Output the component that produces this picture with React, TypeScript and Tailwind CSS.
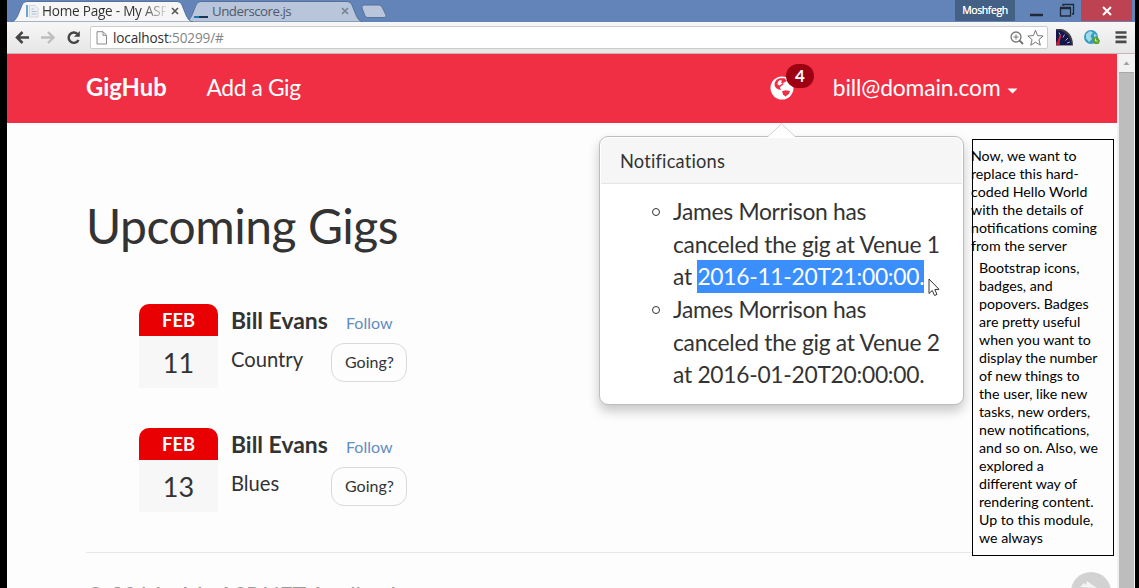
import type { ReactNode } from "react";

const lato = "font-['Lato',sans-serif]";
const segoe = "font-['Open_Sans',sans-serif]";

function TabShape({ width, fill }: { width: number; fill: string }) {
  const w = width;
  return (
    <svg className="absolute inset-0" width={w} height="22" viewBox={`0 0 ${w} 22`}>
      <path
        d={`M0 22 C4 21 5 19 7 15 L11 5 Q12 1.5 16 1.5 H${w - 16} Q${w - 12} 1.5 ${w - 11} 5 L${w - 7} 15 C${w - 5} 19 ${w - 4} 21 ${w} 22 Z`}
        fill={fill}
        stroke="#56719b"
        strokeWidth="1"
      />
    </svg>
  );
}

function TabClose({ color }: { color: string }) {
  return (
    <svg width="8" height="8" viewBox="0 0 8 8" stroke={color} strokeWidth="1.6">
      <path d="M1 1 L7 7 M7 1 L1 7" />
    </svg>
  );
}

function TitleBar() {
  return (
    <div className={`flex h-[22px] bg-[#6384b8] text-[14px] leading-[22px] ${segoe}`}>
      <div className="relative z-10 ml-[4px] h-[22px] w-[182px] shrink-0">
        <TabShape width={182} fill="#f6f6f6" />
        <div className="relative flex items-center pl-[14px]">
          <svg width="14" height="14" viewBox="0 0 14 14">
            <path d="M4.5 1.5 H10 L13 4.5 V13 H4.5 Z" fill="#eef1f4" stroke="#cfd5da" />
            <path d="M6.5 5 H9 M6.5 7.5 H11.5 M6.5 10 H11.5" stroke="#a9bfd2" />
            <path d="M2 1 V13" stroke="#6ba7cd" strokeWidth="2" />
          </svg>
          <span className="ml-[3px] w-[124px] overflow-hidden whitespace-nowrap bg-gradient-to-r from-[#303030] from-80% to-[#30303020] bg-clip-text text-[13.6px] tracking-[-0.25px] text-transparent">
            Home Page - My ASP
          </span>
          <span className="ml-[5px]">
            <TabClose color="#555" />
          </span>
        </div>
      </div>
      <div className="relative ml-[-8px] h-[22px] w-[178px] shrink-0">
        <TabShape width={178} fill="#b8c5da" />
        <div className="relative flex items-center pl-[9px]">
          <span className="mt-[11px] flex">
            <span className="h-[2px] w-[5px] bg-[#2077b4]" />
            <span className="h-[2px] w-[9px] bg-[#1d3650]" />
          </span>
          <span className="ml-[4px] w-[130px] text-[13.3px] tracking-[-0.5px] text-[#4f5b6c]">Underscore.js</span>
          <span className="ml-[-1px]">
            <TabClose color="#76808f" />
          </span>
        </div>
      </div>
      <svg className="ml-[-4px] mt-[4px]" width="30" height="15" viewBox="0 0 30 15">
        <path d="M5 1 H20 Q22 1 23 3 L27 11 Q28 13.500 25 13.500 H9 Q7 13.500 6 12 L3 4 Q2 1 5 1Z" fill="#b8c5da" stroke="#56719b" />
      </svg>
      <div className="ml-auto flex">
        <div className="h-[21px] w-[60px] bg-[#456085] text-center text-[10.500px] tracking-[-0.4px] leading-[20px] text-white [text-shadow:0_0_0.5px_white]">
          Moshfegh
        </div>
        <svg width="66" height="22" viewBox="0 0 66 22" fill="none" stroke="#1f2a38">
          <path d="M15 15 H28" strokeWidth="2.500" />
          <path d="M45.500 8.500 H55.500 V16 H45.500 Z M45 7.500 H56" strokeWidth="1.300" />
          <path d="M48 6 V4.500 H58.500 V14 H57" strokeWidth="1.300" />
        </svg>
        <div className="flex h-[21px] w-[51px] items-center justify-center bg-[#bd4352]">
          <svg width="10" height="10" viewBox="0 0 10 10" stroke="white" strokeWidth="2">
            <path d="M1 1 L9 9 M9 1 L1 9" />
          </svg>
        </div>
        <div className="w-[3px]" />
      </div>
    </div>
  );
}

function Toolbar() {
  return (
    <div className={`flex h-[32px] items-center border-b border-[#c9b5b8] bg-gradient-to-b from-[#f7f7f7] to-[#e6e6e6] ${segoe}`}>
      <svg className="shrink-0" width="83" height="30" viewBox="0 0 83 30" fill="none">
        <path d="M22 14.500 H10 M15.500 9 L10 14.500 L15.500 20" stroke="#454545" strokeWidth="2.500" />
        <path d="M34 14.500 H46 M41 9 L46.500 14.500 L41 20" stroke="#bdbdbd" strokeWidth="2.300" />
        <path d="M71.500 17 A5.200 5.200 0 1 1 70.500 11" stroke="#454545" strokeWidth="2.400" />
        <path d="M72.800 8 V13.800 H67 Z" fill="#454545" />
      </svg>
      <div className="flex h-[23px] w-[958px] shrink-0 items-center rounded-[2px] border border-[#cccccc] bg-white">
        <svg className="ml-[5px]" width="12" height="14" viewBox="0 0 12 14" fill="#fbfbfb" stroke="#8c8c8c">
          <path d="M1 0.700 H7 L10.500 4.300 V13 H1 Z M7 0.700 V4.300 H10.500" />
        </svg>
        <span className="ml-[5px] text-[13.6px] leading-[20px] tracking-[-0.15px] text-[#303030]">
          localhost<span className="text-[#858585]">:50299/#</span>
        </span>
        <svg className="ml-auto mr-px" width="38" height="20" viewBox="0 0 38 20" fill="none" stroke="#777">
          <circle cx="8" cy="9" r="5" strokeWidth="1.300" />
          <path d="M5.500 9 H10.500 M8 6.500 V11.500" />
          <path d="M11.500 12.500 L15 16" strokeWidth="2" />
          <path d="M27.500 2.200 L29.600 7.600 L35.200 8 L30.900 11.600 L32.300 17.200 L27.500 14.200 L22.700 17.200 L24.100 11.600 L19.800 8 L25.400 7.600 Z" />
        </svg>
      </div>
      <svg className="shrink-0" width="80" height="30" viewBox="0 0 80 30">
        <path d="M8 6 H13 C20 7 25 13 25 22.500 H8 Z" fill="#3d3d42" />
        <path d="M8 7.500 H12 C18 9 23 14 23.500 22 H8 Z" fill="#15164a" />
        <path d="M11 9.500 L12.500 12.500 M16.500 11.500 L15 14.500 M20 15 L17.500 17.500 M22 19 L19 20" stroke="#a3a9cc" />
        <path d="M12.500 12.500 L10 20.500" stroke="#e01c35" strokeWidth="2" />
        <circle cx="10" cy="20.500" r="2" fill="#c41a3a" />
        <circle cx="43" cy="14" r="7" fill="#349bc3" />
        <path d="M38 11 L42 8 L45 9.500 L42.500 13 L44 16 L41 19 L38 15.500Z M46 10.500 L49 12.500 L46 14.500Z" fill="#9fdbe8" />
        <path d="M44 17 A4 4 0 0 1 50 14.500 L52 18 L50.500 21 L46.500 21 Z" fill="#5a9f31" />
        <path d="M47.500 15.500 V18 H49.500" stroke="#d9efcc" fill="none" />
        <path d="M67.500 9.500 H78.500 M67.500 14.200 H78.500 M67.500 18.900 H78.500" stroke="#4a4a4a" strokeWidth="2.700" />
      </svg>
    </div>
  );
}

function NavBar() {
  return (
    <nav className="relative flex h-[69px] items-center bg-[#f02f45] pl-[79px] text-[22.8px] text-white">
      <span className="mt-[-1px] w-[120.500px] text-[23.8px] font-bold">GigHub</span>
      <span className="mt-[-2px] tracking-[-0.38px]">Add a Gig</span>
      <svg className="absolute left-[763px] top-[22px]" width="24" height="24" viewBox="0 0 24 24">
        <circle cx="12" cy="12" r="11.500" fill="white" />
        <path
          d="M9.500 2.200 L6.500 3.800 L4.800 6.500 L4.500 9.500 L6 12 L8.500 13.500 L11.500 13.800 L9.800 12 L10.500 10.500 L13.500 8.500 L13 7 L17 5 L14.500 2.200 Z"
          fill="#f02f45"
        />
        <path d="M12 15.200 L15.500 14.200 L20 15 L19 17.800 L15.500 20.500 L13 18.500 Z" fill="#f02f45" />
        <path d="M7.800 6 L9.500 4.200 L12 4.500 L11 6.500 L12.500 7.500 L9.500 9.500 L7.500 8.500 Z" fill="white" />
      </svg>
      <span className="absolute left-[779px] top-[10px] flex h-[24px] w-[28px] items-center justify-center rounded-full bg-[#9c0012] text-[17px] font-bold">
        4
      </span>
      <span className="ml-auto mr-[116.500px] mt-[-2px] tracking-[-0.14px]">bill@domain.com</span>
      <svg className="absolute left-[1000px] top-[34px]" width="11" height="6" viewBox="0 0 11 6">
        <path d="M0.500 0.500 H10.500 L5.500 5.500 Z" fill="white" />
      </svg>
      <Popover />
    </nav>
  );
}

function Notice({ children }: { children: ReactNode }) {
  return (
    <li className="flex">
      <span className="mr-[13px] mt-[13px] size-[8px] shrink-0 rounded-full border border-[#333]" />
      <div className="whitespace-nowrap tracking-[-0.27px]">{children}</div>
    </li>
  );
}

function Popover() {
  return (
    <section className="absolute left-[592px] top-[82px] h-[269px] w-[365px] rounded-[9px] border border-[#bdbdbd] bg-white p-px text-[#333] shadow-[0_6px_12px_rgba(0,0,0,0.22)]">
      <svg className="absolute left-[167px] top-[-14px]" width="30" height="15" viewBox="0 0 30 15">
        <path d="M0.500 14 L14.500 0.800 L28.500 14" fill="white" stroke="#cfcfcf" />
        <path d="M1.500 14.500 H27.500" stroke="white" strokeWidth="1.500" />
      </svg>
      <h2 className="h-[46px] rounded-t-[7px] border-b border-[#e5e5e5] bg-[#f6f6f6] pl-[19px] text-[18.3px] leading-[47px] tracking-[0.18px]">
        Notifications
      </h2>
      <ul className="pl-[51px] pt-[11px] text-[22.8px] leading-[32.6px]">
        <Notice>
          James Morrison has
          <br />
          canceled the gig at Venue 1
          <br />
          at <span className="inline-block h-[33px] bg-[#3b8ffc] align-top text-white">2016-11-20T21:00:00.</span>
        </Notice>
        <Notice>
          James Morrison has
          <br />
          canceled the gig at Venue 2
          <br />
          at 2016-01-20T20:00:00.
        </Notice>
      </ul>
    </section>
  );
}

function Gig({ day, genre }: { day: number; genre: string }) {
  return (
    <article className="flex h-[84px]">
      <div className="w-[79px] overflow-hidden rounded-t-[10px] bg-[#f7f7f7] text-center">
        <div className="h-[32px] bg-[#e90003] text-[18.3px] font-bold leading-[33px] text-white">FEB</div>
        <div className="text-[27px] leading-[54px]">{day}</div>
      </div>
      <div className="ml-[13px] w-[100px] whitespace-nowrap">
        <h3 className="text-[22.9px] font-bold leading-[33px]">Bill Evans</h3>
        <p className="mt-[4px] text-[20.2px] leading-[36px]">{genre}</p>
      </div>
      <div className="flex w-[76px] flex-col">
        <a className="h-[39px] pl-[15px] text-[16px] leading-[38px] text-[#628cc2]">Follow</a>
        <button className="h-[39px] rounded-[13px] border border-[#d9d9d9] pb-px pl-px text-[16px]">Going?</button>
      </div>
    </article>
  );
}

const firstNote = [
  "Now, we want to",
  "replace this hard-",
  "coded Hello World",
  "with the details of",
  "notifications coming",
  "from the server",
];

const secondNote = [
  "Bootstrap icons,",
  "badges, and",
  "popovers. Badges",
  "are pretty useful",
  "when you want to",
  "display the number",
  "of new things to",
  "the user, like new",
  "tasks, new orders,",
  "new notifications,",
  "and so on. Also, we",
  "explored a",
  "different way of",
  "rendering content.",
  "Up to this module,",
  "we always",
];

function Annotation() {
  return (
    <aside className="absolute left-[972px] top-[139px] h-[417px] w-[142px] whitespace-nowrap border border-black bg-[#fdfdfd] pt-[7px] text-[14.2px] leading-[18px] text-black">
      <div className="ml-[-2px]">
        {firstNote.map((line) => (
          <p key={line}>{line}</p>
        ))}
      </div>
      <div className="ml-[6px] mt-[4px]">
        {secondNote.map((line) => (
          <p key={line}>{line}</p>
        ))}
      </div>
    </aside>
  );
}

function ScrollBar() {
  return (
    <div className="flex w-[18px] shrink-0 flex-col items-center bg-[#f1f1f1]">
      <svg className="shrink-0" width="17" height="18" viewBox="0 0 17 18">
        <path d="M5.500 11 L8.500 7.500 L11.500 11 Z" fill="#a0a0a0" />
      </svg>
      <div className="w-[15px] grow border-t border-[#a8a8a8] bg-[#bdbdbd]" />
    </div>
  );
}

export default function App() {
  return (
    <div className={`relative flex h-[588px] w-[1139px] flex-col overflow-hidden bg-black pl-[7px] pr-[4px] text-[#333] ${lato}`}>
      <TitleBar />
      <Toolbar />
      <div className="flex grow">
        <div className="relative flex w-[1110px] flex-col bg-[#fdfdfd]">
          <NavBar />
          <main className="px-[79px] pt-[74px]">
            <h1 className="whitespace-nowrap text-[48px] leading-[58px] tracking-[-0.48px]">Upcoming Gigs</h1>
            <div className="flex flex-col gap-[40px] pl-[53px] pt-[49px]">
              <Gig day={11} genre="Country" />
              <Gig day={13} genre="Blues" />
            </div>
            <hr className="mt-[40px] border-[#e8e8e8]" />
            <footer className="mt-[26px] h-[9px] overflow-hidden whitespace-nowrap text-[22.8px] leading-[32px] tracking-[-0.2px] text-[#999]">
              © 2016 - My ASP.NET Application
            </footer>
          </main>
          <svg className="absolute left-[1064px] top-[518px]" width="42" height="16" viewBox="0 0 42 16">
            <circle cx="20" cy="20" r="20" fill="#d2d2d2" />
            <path d="M9 15 L13 11 L15 13 L16 9 L20 12 L26 16 Z" fill="#f4f4f4" />
          </svg>
        </div>
        <ScrollBar />
      </div>
      <Annotation />
      <svg className="absolute left-[928px] top-[278px]" width="13" height="20" viewBox="0 0 13 20">
        <path d="M1 1 V15.500 L4.300 12.500 L6.500 17.500 L9 16.400 L6.800 11.600 L11 11.300 Z" fill="white" stroke="#333" />
      </svg>
    </div>
  );
}
